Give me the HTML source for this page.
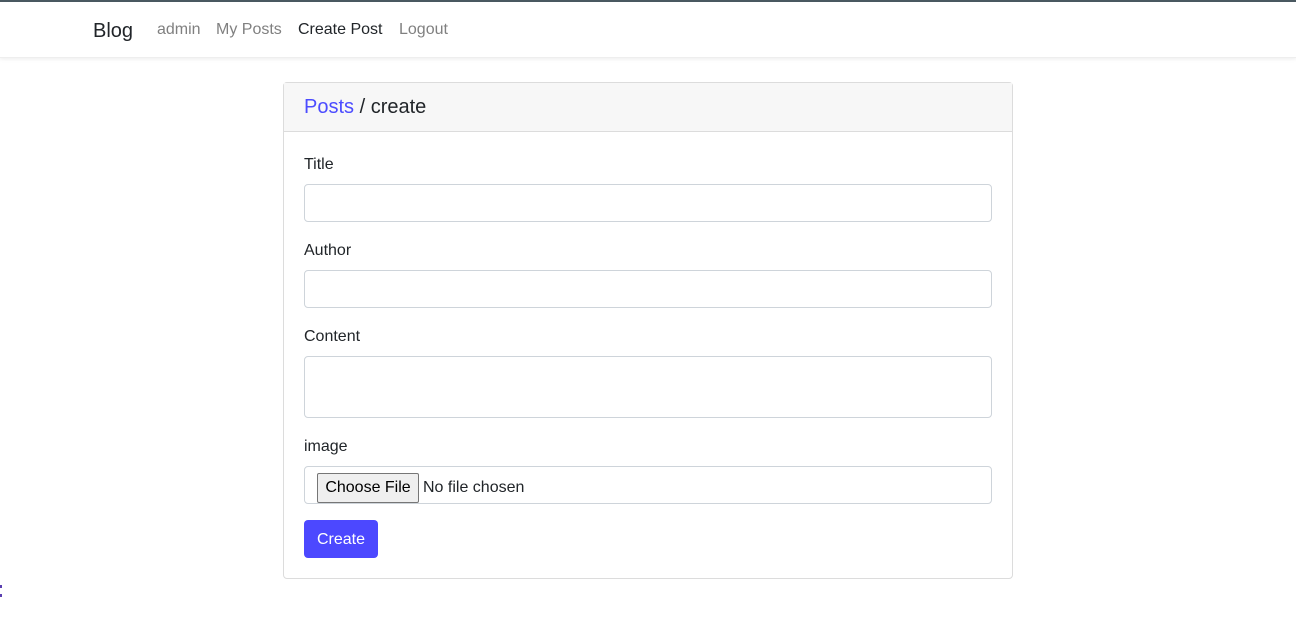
<!DOCTYPE html>
<html><head><meta charset="utf-8"><style>
*{box-sizing:border-box;margin:0;padding:0}
body{width:1296px;height:637px;background:#fff;font-family:"Liberation Sans",sans-serif;position:relative;overflow:hidden;color:#212529}
.top{position:absolute;left:0;top:0;width:1296px;height:2px;background:#4b5a62}
.nav{position:absolute;left:0;top:2px;width:1296px;height:56px;background:#fff;box-shadow:0 1px 4px rgba(0,0,0,.08);border-bottom:1px solid #eee}
.nav span{position:absolute;top:19px;font-size:16px;color:#808080}
.brand{left:93px;top:18px!important;font-size:20px!important;color:#212529!important}
.card{position:absolute;left:283px;top:82px;width:730px;height:497px;border:1px solid #dcdcdc;border-radius:4px}
.hdr{height:49px;background:#f7f7f7;border-bottom:1px solid #dcdcdc;padding:13px 20px 0;font-size:20px}
.hdr a{color:#4c4cff;text-decoration:none}
.lbl{position:absolute;left:20px;font-size:16px}
.inp{position:absolute;left:20px;width:688px;height:38px;border:1px solid #ced4da;border-radius:4px;background:#fff}
.btnf{position:absolute;left:12px;top:6px;width:102px;height:30px;background:#efefef;border:1px solid #767676;border-radius:2px;font-size:16px;text-align:center;line-height:28px;color:#000}
.nf{position:absolute;left:118px;top:12px;font-size:16px}
.create{position:absolute;left:20px;top:437px;width:74px;height:38px;background:#4c48ff;border-radius:4px;color:#fff;font-size:16px;text-align:center;line-height:40px}
</style></head><body>
<div class="top"></div>
<div class="nav">
<span class="brand">Blog</span>
<span style="left:157px">admin</span>
<span style="left:216px">My Posts</span>
<span style="left:298px;color:#212529">Create Post</span>
<span style="left:399px">Logout</span>
</div>
<div class="card">
<div class="hdr"><a>Posts</a> / create</div>
<div class="lbl" style="top:73px">Title</div>
<div class="inp" style="top:101px"></div>
<div class="lbl" style="top:159px">Author</div>
<div class="inp" style="top:187px"></div>
<div class="lbl" style="top:245px">Content</div>
<div class="inp" style="top:273px;height:62px"></div>
<div class="lbl" style="top:355px">image</div>
<div class="inp" style="top:383px"><div class="btnf">Choose File</div><div class="nf">No file chosen</div></div>
<div class="create">Create</div>
</div>
<div style="position:absolute;left:0;top:585px;width:2px;height:3px;background:#5a3fb0"></div>
<div style="position:absolute;left:0;top:594px;width:2px;height:3px;background:#5a3fb0"></div>
</body></html>
